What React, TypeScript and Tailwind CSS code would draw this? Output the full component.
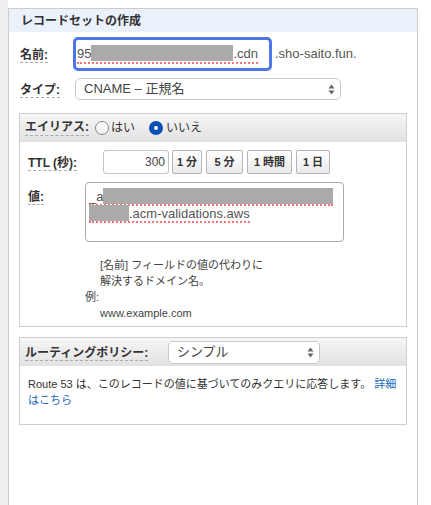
import React from "react";

const font = "font-['Liberation_Sans','Noto_Sans_CJK_JP',sans-serif]";

function Label({ children }: { children: React.ReactNode }) {
  return (
    <span className="font-bold text-[12px] leading-[15px] text-[#333] border-b border-dashed border-[#aaa]">
      {children}
    </span>
  );
}

function Redact({ w }: { w: number }) {
  return <span className="inline-block h-[16px] bg-[#aaaaaa] align-[-3px]" style={{ width: w }} />;
}

function Arrows() {
  return (
    <svg width="7" height="11" viewBox="0 0 7 11" className="shrink-0">
      <path d="M3.5 0.5 L6.5 4.5 H0.5 Z" fill="#666" />
      <path d="M3.5 10.5 L6.5 6.5 H0.5 Z" fill="#666" />
    </svg>
  );
}

function Radio({ checked }: { checked?: boolean }) {
  if (checked) {
    return (
      <span className="inline-flex w-[14px] h-[14px] rounded-full bg-[#0b4fb5] items-center justify-center">
        <span className="w-[4px] h-[4px] rounded-full bg-white" />
      </span>
    );
  }
  return (
    <span className="inline-block w-[14px] h-[14px] rounded-full border border-[#888] bg-gradient-to-b from-white to-[#f0f0f0]" />
  );
}

function TtlButton({ children, w }: { children: React.ReactNode; w: number }) {
  return (
    <div
      className="h-[24px] flex items-center justify-center border border-[#b5b5b5] rounded-[2px] bg-gradient-to-b from-white to-[#eaeaea] text-[11px] font-bold text-[#333]"
      style={{ width: w }}
    >
      {children}
    </div>
  );
}

export default function App() {
  return (
    <div className={`${font} w-[431px] h-[505px] bg-white flex overflow-hidden`}>
      <div className="w-[8px] h-full bg-[#efefef]" />
      <div className="mt-[8px] w-[410px] border-t border-x border-[#cccccc] flex flex-col">
        <div className="h-[23px] bg-[#eaf1fb] pl-[12px] flex items-center">
          <span className="text-[12px] font-bold text-[#333]">レコードセットの作成</span>
        </div>

        <div className="px-[10px] pt-[5px]">
          {/* name */}
          <div className="flex items-center pl-[1px]">
            <div className="w-[53px]">
              <Label>名前:</Label>
            </div>
            <div className="w-[199px] h-[34px] border-[3px] border-[#4b76e3] rounded-[5px] flex items-center overflow-hidden pl-[1px]">
              <span className="text-[13px] text-[#555] whitespace-nowrap border-b-2 border-dotted border-[#f47575] leading-[16px]">
                95<Redact w={142} />.cdn
              </span>
            </div>
            <span className="ml-[3px] text-[13px] text-[#555]">.sho-saito.fun.</span>
          </div>

          {/* type */}
          <div className="flex items-center pl-[1px] mt-[6px]">
            <div className="w-[55px]">
              <Label>タイプ:</Label>
            </div>
            <div className="w-[266px] h-[22px] border border-[#c8c8c8] rounded-[5px] flex items-center justify-between pl-[8px] pr-[5px]">
              <span className="text-[13px] text-[#444]">CNAME – 正規名</span>
              <Arrows />
            </div>
          </div>

          {/* alias box */}
          <div className="mt-[12px] border border-[#cfcfcf]">
            <div className="h-[28px] bg-gradient-to-b from-[#f6f6f6] to-[#e2e2e2] flex items-center pl-[5px] gap-[5px] text-[12px] text-[#333]">
              <Label>エイリアス:</Label>
              <span className="flex items-center gap-[2px] ml-[1px]">
                <Radio />
                <span>はい</span>
              </span>
              <span className="flex items-center gap-[3px] ml-[9px]">
                <Radio checked />
                <span>いいえ</span>
              </span>
            </div>

            <div className="pl-[8px] pt-[8px] pb-[5px]">
              <div className="flex items-center">
                <div className="w-[75px]">
                  <Label>TTL (秒):</Label>
                </div>
                <div className="w-[66px] h-[24px] border border-[#c4c4c4] rounded-[3px] flex items-center justify-end pr-[3px] text-[12px] text-[#444]">
                  300
                </div>
                <div className="flex gap-[4px] ml-[3px]">
                  <TtlButton w={30}>1 分</TtlButton>
                  <TtlButton w={37}>5 分</TtlButton>
                  <TtlButton w={45}>1 時間</TtlButton>
                  <TtlButton w={34}>1 日</TtlButton>
                </div>
              </div>

              <div className="flex mt-[8px]">
                <div className="w-[57px] pt-[2px]">
                  <Label>値:</Label>
                </div>
                <div className="w-[259px] h-[60px] border border-[#aaa] rounded-[4px] pl-[3px] pt-[5px] text-[13px] text-[#555] leading-[17px]">
                  <div className="whitespace-nowrap">
                    <span className="border-b-2 border-dotted border-[#f47575]">
                      _a<Redact w={230} />
                    </span>
                  </div>
                  <div className="whitespace-nowrap">
                    <span className="border-b-2 border-dotted border-[#f47575]">
                      <Redact w={40} />.acm-validations.aws
                    </span>
                  </div>
                </div>
              </div>

              <div className="mt-[15px] pl-[57px] text-[11px] leading-[16px] text-[#444]">
                <div className="pl-[15px]">[名前] フィールドの値の代わりに</div>
                <div className="pl-[15px]">解決するドメイン名。</div>
                <div>例:</div>
                <div className="pl-[15px]">www.example.com</div>
              </div>
            </div>
          </div>

          {/* routing box */}
          <div className="mt-[10px] border border-[#cfcfcf]">
            <div className="h-[28px] bg-gradient-to-b from-[#f6f6f6] to-[#e2e2e2] flex items-center pl-[5px]">
              <div className="w-[143px]">
                <Label>ルーティングポリシー:</Label>
              </div>
              <div className="w-[152px] h-[23px] bg-white border border-[#c8c8c8] rounded-[5px] flex items-center justify-between pl-[8px] pr-[5px]">
                <span className="text-[13px] text-[#444]">シンプル</span>
                <Arrows />
              </div>
            </div>
            <div className="pl-[8px] pt-[10px] pb-[16px] text-[11px] leading-[16px] text-[#333]">
              <div className="whitespace-nowrap">
                Route 53 は、このレコードの値に基づいてのみクエリに応答します。{" "}
                <span className="text-[#1a6bbf]">詳細</span>
              </div>
              <div className="text-[#1a6bbf]">はこちら</div>
            </div>
          </div>
        </div>
      </div>
    </div>
  );
}
